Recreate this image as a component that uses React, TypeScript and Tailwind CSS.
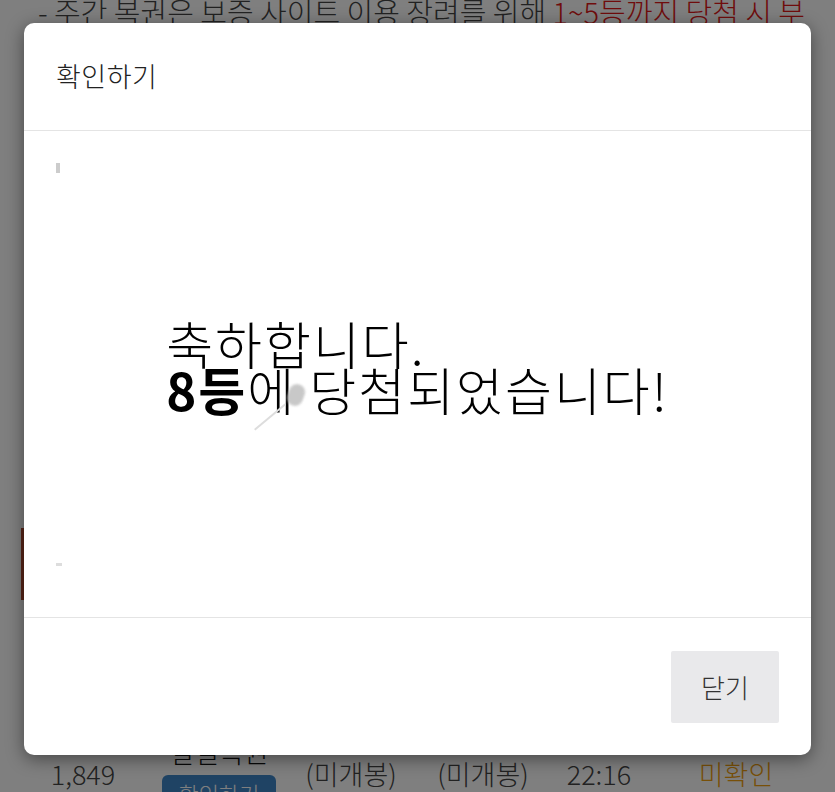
import React from "react";

export default function App() {
  return (
    <div className="relative h-[792px] w-[835px] overflow-hidden bg-white font-['Noto_Sans_CJK_KR','Noto_Sans',sans-serif]">
      {/* background page */}
      <div className="flex h-full flex-col">
        <div className="-mt-[9px] whitespace-nowrap pl-[38px] text-[29px] font-light leading-[40px] text-[#444]">
          - 주간 복권은 보증 사이트 이용 장려를 위해{" "}
          <span className="text-[#e01818]">1~5등까지 당첨 시 부</span>
        </div>
        <div className="ml-[21px] mt-[497px] h-[72px] w-[240px] bg-[#b04a30]" />
        <div className="mt-auto -mb-[32px] grid h-[100px] grid-cols-[126px_146px_118px_146px_86px_188px] items-center pl-[20px] text-[27px] font-light leading-[30px] text-[#444]">
          <div className="text-center">1,849</div>
          <div className="flex flex-col items-center">
            <div className="text-[#111]">일일복권</div>
            <div className="mt-[8px] flex h-[36px] w-[114px] items-center justify-center rounded-[6px] bg-[#3f86c8] text-[22px] text-white">
              확인하기
            </div>
          </div>
          <div className="text-center">(미개봉)</div>
          <div className="text-center">(미개봉)</div>
          <div className="text-center">22:16</div>
          <div className="text-center text-[#f0a010]">미확인</div>
        </div>
      </div>

      {/* overlay */}
      <div className="absolute inset-0 bg-black/50" />

      {/* modal */}
      <div className="absolute left-[24px] top-[23px] flex h-[732px] w-[787px] flex-col rounded-[10px] bg-white shadow-[0_4px_18px_rgba(0,0,0,0.45)]">
        <div className="flex h-[108px] items-center border-b border-[#e4e4e4] px-[32px] text-[27px] font-light tracking-[0.5px] text-[#222]">
          확인하기
        </div>
        <div className="relative flex flex-1 items-center justify-center">
          <span className="absolute left-[32px] top-[32px] h-[10px] w-[4px] bg-[#ccc]" />
          <span className="absolute left-[32px] top-[432px] h-[3px] w-[6px] bg-[#ddd]" />
          <div className="relative -mt-[16px] text-left text-[51px] font-light leading-[46px] tracking-[2px] text-black">
            <div>축하합니다.</div>
            <div>
              <span className="font-bold">8등</span>에 당첨되었습니다!
            </div>
            <span className="absolute left-[122px] top-[64px] h-[22px] w-[16px] rotate-[20deg] rounded-full bg-[#bbb] opacity-80 blur-[1px]" />
            <span className="absolute left-[84px] top-[96px] h-[2px] w-[40px] -rotate-[40deg] bg-[#ddd]" />
          </div>
        </div>
        <div className="flex h-[138px] items-center justify-end border-t border-[#e4e4e4] px-[32px]">
          <div className="flex h-[72px] w-[108px] items-center justify-center rounded-[2px] bg-[#e9e9eb] text-[26px] font-light text-[#333]">
            닫기
          </div>
        </div>
      </div>
    </div>
  );
}
